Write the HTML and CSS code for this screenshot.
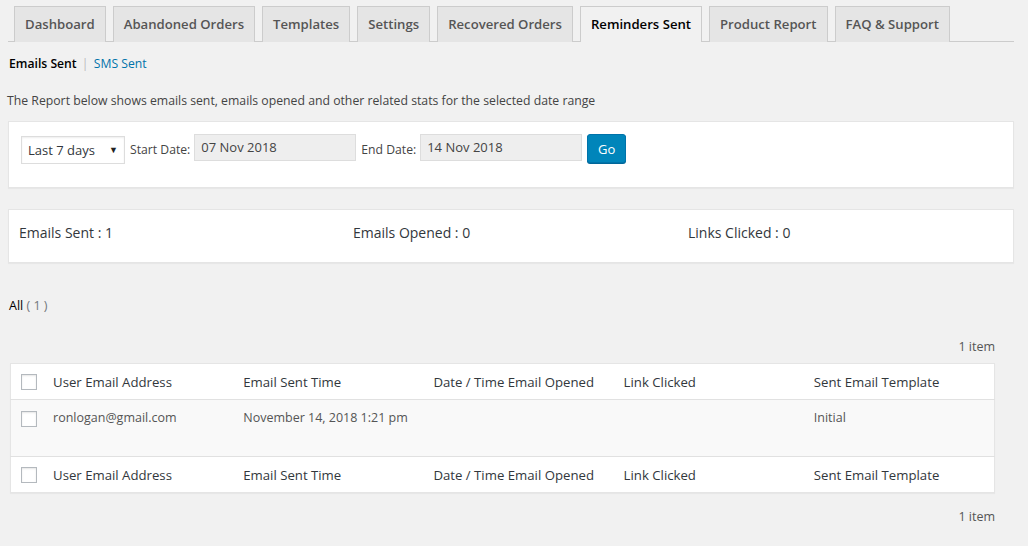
FILE: index.html
```html
<!DOCTYPE html>
<html>
<head>
<meta charset="utf-8">
<link rel="stylesheet" href="styles.css">
</head>
<body>
<div class="wrap">
  <nav class="tabs">
    <a class="tab">Dashboard</a>
    <a class="tab">Abandoned Orders</a>
    <a class="tab">Templates</a>
    <a class="tab">Settings</a>
    <a class="tab">Recovered Orders</a>
    <a class="tab active">Reminders Sent</a>
    <a class="tab">Product Report</a>
    <a class="tab">FAQ &amp; Support</a>
  </nav>
  <div class="subsub"><span class="cur">Emails Sent</span> <span class="sep">|</span> <a class="link">SMS Sent</a></div>
  <p class="desc">The Report below shows emails sent, emails opened and other related stats for the selected date range</p>
  <div class="box filter">
    <div class="select">Last 7 days<span class="arrow">▼</span></div>
    <label class="lbl">Start Date:</label>
    <div class="input">07 Nov 2018</div>
    <label class="lbl">End Date:</label>
    <div class="input">14 Nov 2018</div>
    <button class="go">Go</button>
  </div>
  <div class="box stats">
    <div class="stat">Emails Sent : 1</div>
    <div class="stat">Emails Opened : 0</div>
    <div class="stat">Links Clicked : 0</div>
  </div>
  <div class="views"><span class="all">All</span> <span class="count">( 1 )</span></div>
  <div class="list">
    <div class="items">1 item</div>
    <table class="table">
      <thead>
        <tr>
          <td class="cb"><span class="check"></span></td>
          <th>User Email Address</th>
          <th>Email Sent Time</th>
          <th>Date / Time Email Opened</th>
          <th>Link Clicked</th>
          <th>Sent Email Template</th>
        </tr>
      </thead>
      <tbody>
        <tr>
          <td class="cb"><span class="check"></span></td>
          <td>ronlogan@gmail.com</td>
          <td>November 14, 2018 1:21 pm</td>
          <td></td>
          <td></td>
          <td>Initial</td>
        </tr>
      </tbody>
      <tfoot>
        <tr>
          <td class="cb"><span class="check"></span></td>
          <th>User Email Address</th>
          <th>Email Sent Time</th>
          <th>Date / Time Email Opened</th>
          <th>Link Clicked</th>
          <th>Sent Email Template</th>
        </tr>
      </tfoot>
    </table>
    <div class="items bottom">1 item</div>
  </div>
</div>
</body>
</html>
```
FILE: styles.css
```css
html, body {
  margin: 0;
  padding: 0;
  background: #f1f1f1;
}
body {
  font-family: "Open Sans", "Noto Sans", sans-serif;
  font-size: 12.5px;
  color: #444;
  width: 1028px;
  height: 546px;
  overflow: hidden;
}
.wrap {
  padding: 6px 14px 0 8px;
}
.tabs {
  display: flex;
  gap: 7px;
  padding-left: 6px;
  border-bottom: 1px solid #ccc;
  height: 35px;
}
.tab {
  display: block;
  box-sizing: border-box;
  height: 36px;
  padding: 0 10px;
  line-height: 34px;
  font-size: 13.15px;
  font-weight: 600;
  color: #555;
  background: #e5e5e5;
  border: 1px solid #ccc;
  border-bottom: none;
  white-space: nowrap;
}
.tab.active {
  background: #f1f1f1;
  color: #000;
}
.subsub {
  margin-top: 12px;
  padding-left: 1px;
  font-size: 12.2px;
  line-height: 20px;
}
.cur { color: #000; font-weight: 600; }
.sep { color: #bbb; margin: 0 2px; }
.link { color: #0073aa; }
.desc {
  margin: 17px 0 0 -1px;
  line-height: 20px;
  font-size: 12.25px;
  color: #444;
}
.box {
  background: #fff;
  border: 1px solid #e5e5e5;
  box-shadow: 0 1px 1px rgba(0,0,0,.04);
}
.filter {
  margin-top: 10px;
  height: 67px;
  box-sizing: border-box;
  display: flex;
  align-items: flex-start;
  padding: 12px 0 0 12px;
}
.select {
  box-sizing: border-box;
  width: 104px;
  height: 28px;
  margin-top: 2px;
  border: 1px solid #ddd;
  background: #fff;
  padding: 0 6px;
  line-height: 26px;
  font-size: 13px;
  color: #32373c;
  display: flex;
  justify-content: space-between;
  box-shadow: inset 0 1px 2px rgba(0,0,0,.07);
}
.arrow { font-size: 9px; color: #222; }
.lbl {
  margin: 2px 4px 0 5px;
  line-height: 28px;
  font-size: 12.2px;
  color: #444;
}
.input {
  box-sizing: border-box;
  width: 162px;
  height: 27px;
  background: #eee;
  border: 1px solid #ddd;
  padding: 0 6px;
  line-height: 25px;
  font-size: 13px;
  color: #444;
}
.go {
  box-sizing: border-box;
  margin-left: 5px;
  width: 39px;
  height: 29px;
  background: #0085ba;
  border: 1px solid #0073aa;
  border-radius: 3px;
  color: #fff;
  font-family: inherit;
  font-size: 13px;
  padding: 0;
  box-shadow: 0 1px 0 #006799;
}
.stats {
  margin-top: 21px;
  height: 54px;
  box-sizing: border-box;
  display: grid;
  grid-template-columns: 334px 335px 1fr;
  align-items: start;
  padding: 13px 0 0 10px;
}
.stat {
  font-size: 14px;
  line-height: 20px;
  color: #32373c;
}
.views {
  margin-top: 33px;
  padding-left: 1px;
  line-height: 20px;
}
.all { color: #000; }
.count { color: #72777c; }
.list {
  padding: 0 19px 0 2px;
}
.items {
  text-align: right;
  color: #555;
  margin-top: 21px;
  line-height: 20px;
  height: 26px;
}
.items.bottom {
  margin-top: 14px;
}
.table {
  width: 100%;
  border-collapse: collapse;
  background: #fff;
  border: 1px solid #e5e5e5;
  box-shadow: 0 1px 1px rgba(0,0,0,.04);
  table-layout: fixed;
}
.table th, .table td {
  text-align: left;
  font-weight: 400;
  padding: 0 10px;
  vertical-align: middle;
}
.table th {
  font-size: 13.2px;
  color: #32373c;
  height: 35px;
  width: 170px;
}
.table tbody td {
  background: #f9f9f9;
  color: #555;
  height: 57px;
  vertical-align: top;
  padding-top: 9px;
  box-sizing: border-box;
}
.table thead tr { border-bottom: 1px solid #e1e1e1; }
.table tfoot tr { border-top: 1px solid #e1e1e1; }
.table td.cb {
  width: 22px;
  padding: 0 0 0 10px;
}
.table tbody td.cb { padding-top: 11px; }
.check {
  display: block;
  box-sizing: border-box;
  width: 16px;
  height: 16px;
  border: 1px solid #b4b9be;
  background: #fff;
  box-shadow: inset 0 1px 2px rgba(0,0,0,.1);
}
```
